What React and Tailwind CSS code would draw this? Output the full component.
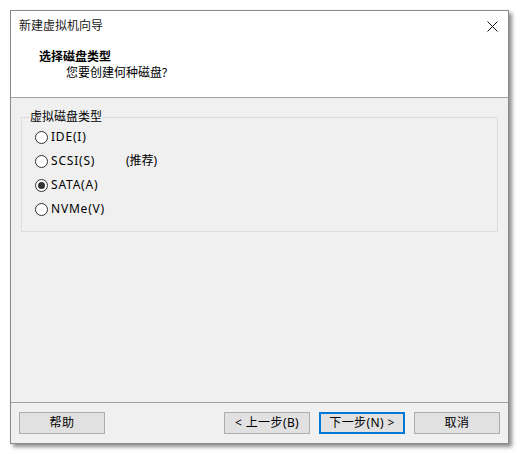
const options = [
  { label: "IDE(I)" },
  { label: "SCSI(S)", note: "(推荐)" },
  { label: "SATA(A)", checked: true },
  { label: "NVMe(V)" },
];

const Radio = ({ checked }) => (
  <span className="w-[13px] h-[13px] rounded-full border border-[#333333] bg-white flex items-center justify-center">
    {checked && <span className="w-[7px] h-[7px] rounded-full bg-[#333333]" />}
  </span>
);

const Button = ({ children, primary }) => (
  <button
    type="button"
    className={
      primary
        ? "w-[86px] h-[22px] bg-[#e1e1e1] border-2 border-[#0078d7] text-[12px] leading-none tracking-[0.4px] text-black"
        : "w-[86px] h-[22px] bg-[#e1e1e1] border border-[#adadad] text-[12px] leading-none tracking-[0.4px] text-black"
    }
  >
    {children}
  </button>
);

export default function App() {
  return (
    <div
      className="w-[520px] h-[454px] bg-white pl-[10px] pt-[10px]"
      style={{ fontFamily: '"Noto Sans", "Noto Sans CJK SC", sans-serif' }}
    >
      <div className="w-[499px] h-[434px] border border-[#8a8a8a] bg-[#f0f0f0] flex flex-col shadow-[3px_3px_4px_rgba(0,0,0,0.45)]">
        {/* header */}
        <div className="h-[86px] bg-white flex flex-col">
          <div className="h-[30px] flex items-center justify-between pl-[8px] pr-[10px]">
            <span className="text-[12px] text-[#1a1a1a]">新建虚拟机向导</span>
            <svg width="11" height="11" viewBox="0 0 11 11">
              <path d="M0.5 0.5 L10.5 10.5 M10.5 0.5 L0.5 10.5" stroke="#111" strokeWidth="1" />
            </svg>
          </div>
          <div className="mt-[8px] pl-[28px] h-[16px] text-[12px] leading-[16px] font-bold text-black">
            选择磁盘类型
          </div>
          <div className="pl-[55px] h-[16px] text-[12px] leading-[16px] text-black">
            您要创建何种磁盘?
          </div>
        </div>
        <div className="h-px bg-[#a0a0a0]" />

        {/* content */}
        <div className="flex-1 pt-[11px] px-[10px]">
          <fieldset className="border border-[#dcdcdc] pl-[7px] pr-[8px] pb-[10px]">
            <legend className="px-[1px] text-[12px] leading-[16px] text-black">虚拟磁盘类型</legend>
            <div className="ml-[6px] flex flex-col">
              {options.map((o) => (
                <div key={o.label} className="h-[24px] flex items-center gap-[3px] text-[12px] text-black">
                  <Radio checked={o.checked} />
                  <span className="w-[72px] tracking-[0.8px]">{o.label}</span>
                  {o.note && <span>{o.note}</span>}
                </div>
              ))}
            </div>
          </fieldset>
        </div>

        {/* footer */}
        <div className="h-px bg-[#a0a0a0]" />
        <div className="h-[40px] flex items-start pt-[9px] pl-[8px] pr-[8px]">
          <Button>帮助</Button>
          <div className="flex-1" />
          <div className="flex gap-[9px]">
            <Button>&lt; 上一步(B)</Button>
            <Button primary>下一步(N) &gt;</Button>
            <Button>取消</Button>
          </div>
        </div>
      </div>
    </div>
  );
}
